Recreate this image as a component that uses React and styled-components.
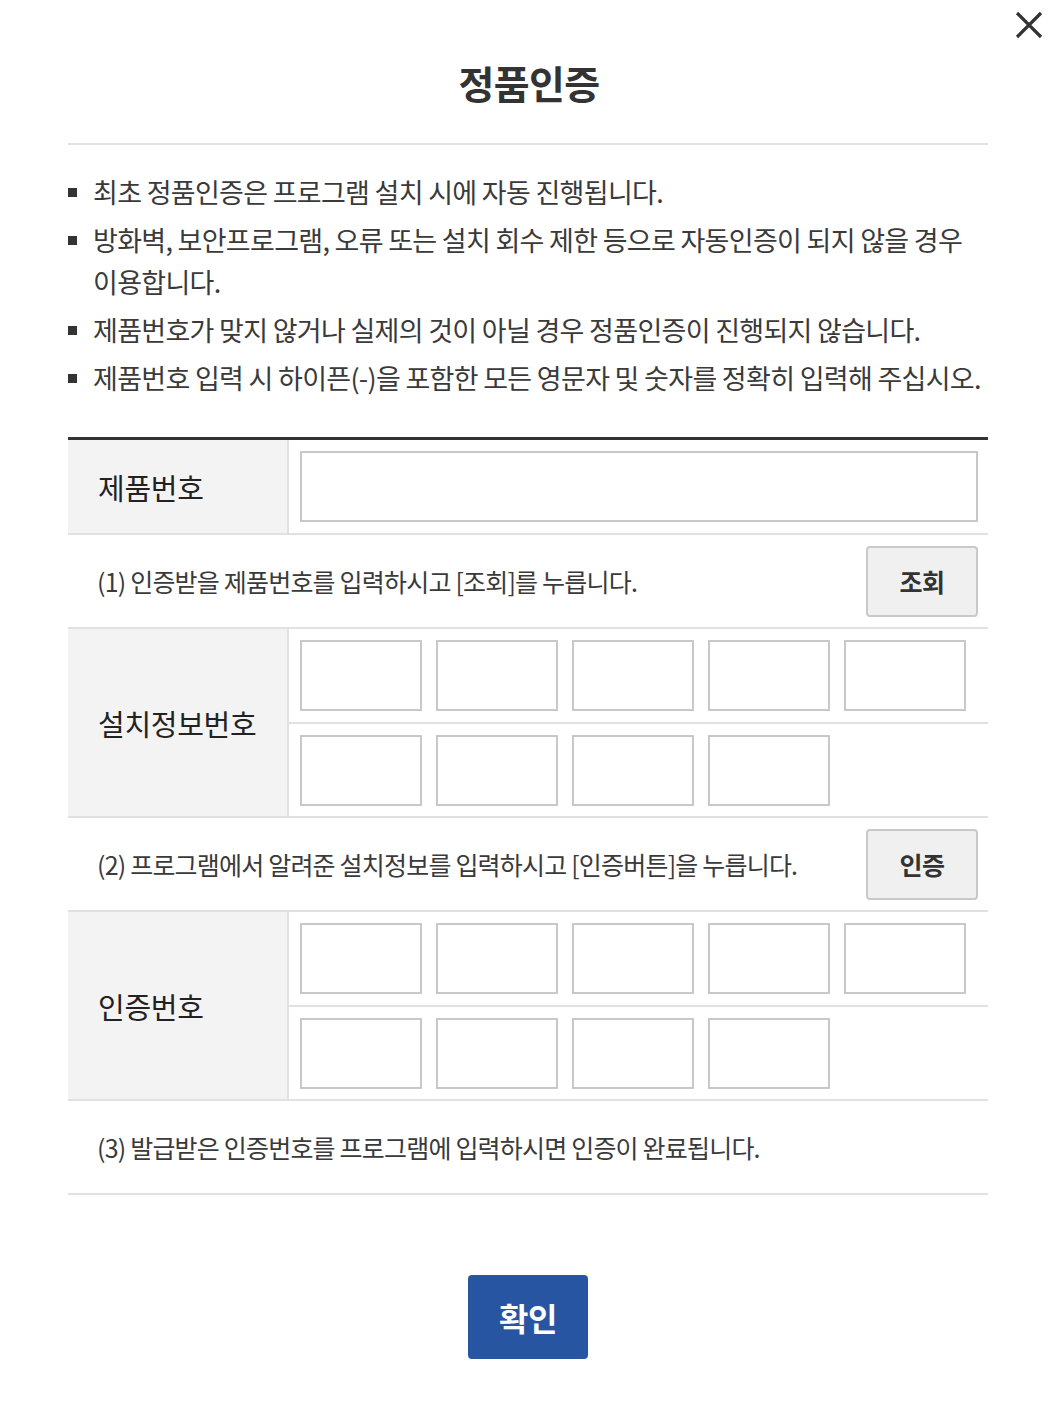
import React from "react";
import styled, { createGlobalStyle } from "styled-components";

const GlobalStyle = createGlobalStyle`
  html, body {
    margin: 0;
    padding: 0;
    background: #fff;
  }
  body {
    font-family: "Noto Sans CJK KR", "Noto Sans", sans-serif;
    color: #333;
  }
`;

const Popup = styled.div`
  position: relative;
  width: 920px;
  padding: 0 60px 49px 68px;
`;

const CloseButton = styled.button`
  position: absolute;
  top: 11px;
  right: 5px;
  width: 28px;
  height: 28px;
  padding: 0;
  border: 0;
  background: none;
  cursor: pointer;
  svg {
    display: block;
  }
`;

const Header = styled.div`
  height: 143px;
  display: flex;
  align-items: center;
  justify-content: center;
  border-bottom: 2px solid #e3e3e3;
`;

const Title = styled.h1`
  margin: 0;
  padding: 20px 0 0 2px;
  font-size: 39px;
  font-weight: 700;
  letter-spacing: -0.6px;
  color: #333;
`;

const Notice = styled.ul`
  list-style: none;
  margin: 0;
  padding: 26px 0 0;
`;

const NoticeItem = styled.li`
  display: flex;
  align-items: flex-start;
  margin-bottom: 6px;
  font-size: 27px;
  line-height: 42px;
  letter-spacing: -0.7px;
  word-break: keep-all;
  color: #3a3a3a;
`;

const Square = styled.span`
  flex-shrink: 0;
  width: 9px;
  height: 9px;
  margin: 17px 16px 0 0;
  background: #333;
`;

const Form = styled.div`
  margin-top: 38px;
  border-top: 3px solid #333;
`;

const Row = styled.div`
  display: grid;
  grid-template-columns: 221px 1fr;
  border-bottom: 2px solid #e1e1e1;
`;

const Label = styled.div`
  display: flex;
  align-items: center;
  padding-left: 30px;
  background: #f3f3f3;
  border-right: 2px solid #e1e1e1;
  font-size: 29px;
  letter-spacing: -0.3px;
  color: #222;
`;

const Field = styled.div`
  display: flex;
  flex-direction: column;
`;

const BoxLine = styled.div`
  display: flex;
  gap: 14px;
  height: ${(p) => (p.first ? "93px" : "92px")};
  align-items: center;
  padding: 0 11px;
  border-top: ${(p) => (p.first ? "0" : "2px solid #e1e1e1")};
`;

const Input = styled.input`
  box-sizing: border-box;
  width: ${(p) => (p.wide ? "678px" : "122px")};
  height: 71px;
  border: 2px solid #c8c8c8;
  background: #fff;
  outline: none;
`;

const Guide = styled.div`
  display: flex;
  align-items: center;
  justify-content: space-between;
  height: 92px;
  padding: 0 10px 0 29px;
  border-bottom: 2px solid #e1e1e1;
`;

const GuideText = styled.p`
  margin: 0;
  font-size: 25px;
  letter-spacing: -0.8px;
  color: #3a3a3a;
`;

const SubButton = styled.button`
  box-sizing: border-box;
  width: 112px;
  height: 71px;
  border: 2px solid #c9c9c9;
  border-radius: 4px;
  background: #f0f0f0;
  font-family: inherit;
  font-size: 25px;
  font-weight: 700;
  letter-spacing: -0.5px;
  color: #333;
  cursor: pointer;
`;

const Footer = styled.div`
  display: flex;
  justify-content: center;
  padding-top: 80px;
`;

const ConfirmButton = styled.button`
  width: 120px;
  height: 84px;
  border: 0;
  border-radius: 4px;
  background: #2755a2;
  font-family: inherit;
  font-size: 32px;
  font-weight: 700;
  letter-spacing: -0.5px;
  color: #fff;
  cursor: pointer;
`;

const notices = [
  "최초 정품인증은 프로그램 설치 시에 자동 진행됩니다.",
  "방화벽, 보안프로그램, 오류 또는 설치 회수 제한 등으로 자동인증이 되지 않을 경우 이용합니다.",
  "제품번호가 맞지 않거나 실제의 것이 아닐 경우 정품인증이 진행되지 않습니다.",
  "제품번호 입력 시 하이픈(-)을 포함한 모든 영문자 및 숫자를 정확히 입력해 주십시오.",
];

function CodeBoxes() {
  return (
    <Field>
      <BoxLine first>
        {[0, 1, 2, 3, 4].map((i) => (
          <Input key={i} maxLength={5} />
        ))}
      </BoxLine>
      <BoxLine>
        {[0, 1, 2, 3].map((i) => (
          <Input key={i} maxLength={5} />
        ))}
      </BoxLine>
    </Field>
  );
}

export default function App() {
  return (
    <>
      <GlobalStyle />
      <Popup>
        <CloseButton aria-label="닫기">
          <svg width="28" height="28" viewBox="0 0 28 28">
            <path
              d="M2 2 L26 26 M26 2 L2 26"
              stroke="#333"
              strokeWidth="3.2"
              fill="none"
            />
          </svg>
        </CloseButton>
        <Header>
          <Title>정품인증</Title>
        </Header>

        <Notice>
          {notices.map((text) => (
            <NoticeItem key={text}>
              <Square />
              <span>{text}</span>
            </NoticeItem>
          ))}
        </Notice>

        <Form>
          <Row>
            <Label>제품번호</Label>
            <Field>
              <BoxLine first>
                <Input wide />
              </BoxLine>
            </Field>
          </Row>
          <Guide>
            <GuideText>(1) 인증받을 제품번호를 입력하시고 [조회]를 누릅니다.</GuideText>
            <SubButton>조회</SubButton>
          </Guide>

          <Row>
            <Label>설치정보번호</Label>
            <CodeBoxes />
          </Row>
          <Guide>
            <GuideText>(2) 프로그램에서 알려준 설치정보를 입력하시고 [인증버튼]을 누릅니다.</GuideText>
            <SubButton>인증</SubButton>
          </Guide>

          <Row>
            <Label>인증번호</Label>
            <CodeBoxes />
          </Row>
          <Guide>
            <GuideText>(3) 발급받은 인증번호를 프로그램에 입력하시면 인증이 완료됩니다.</GuideText>
          </Guide>
        </Form>

        <Footer>
          <ConfirmButton>확인</ConfirmButton>
        </Footer>
      </Popup>
    </>
  );
}
